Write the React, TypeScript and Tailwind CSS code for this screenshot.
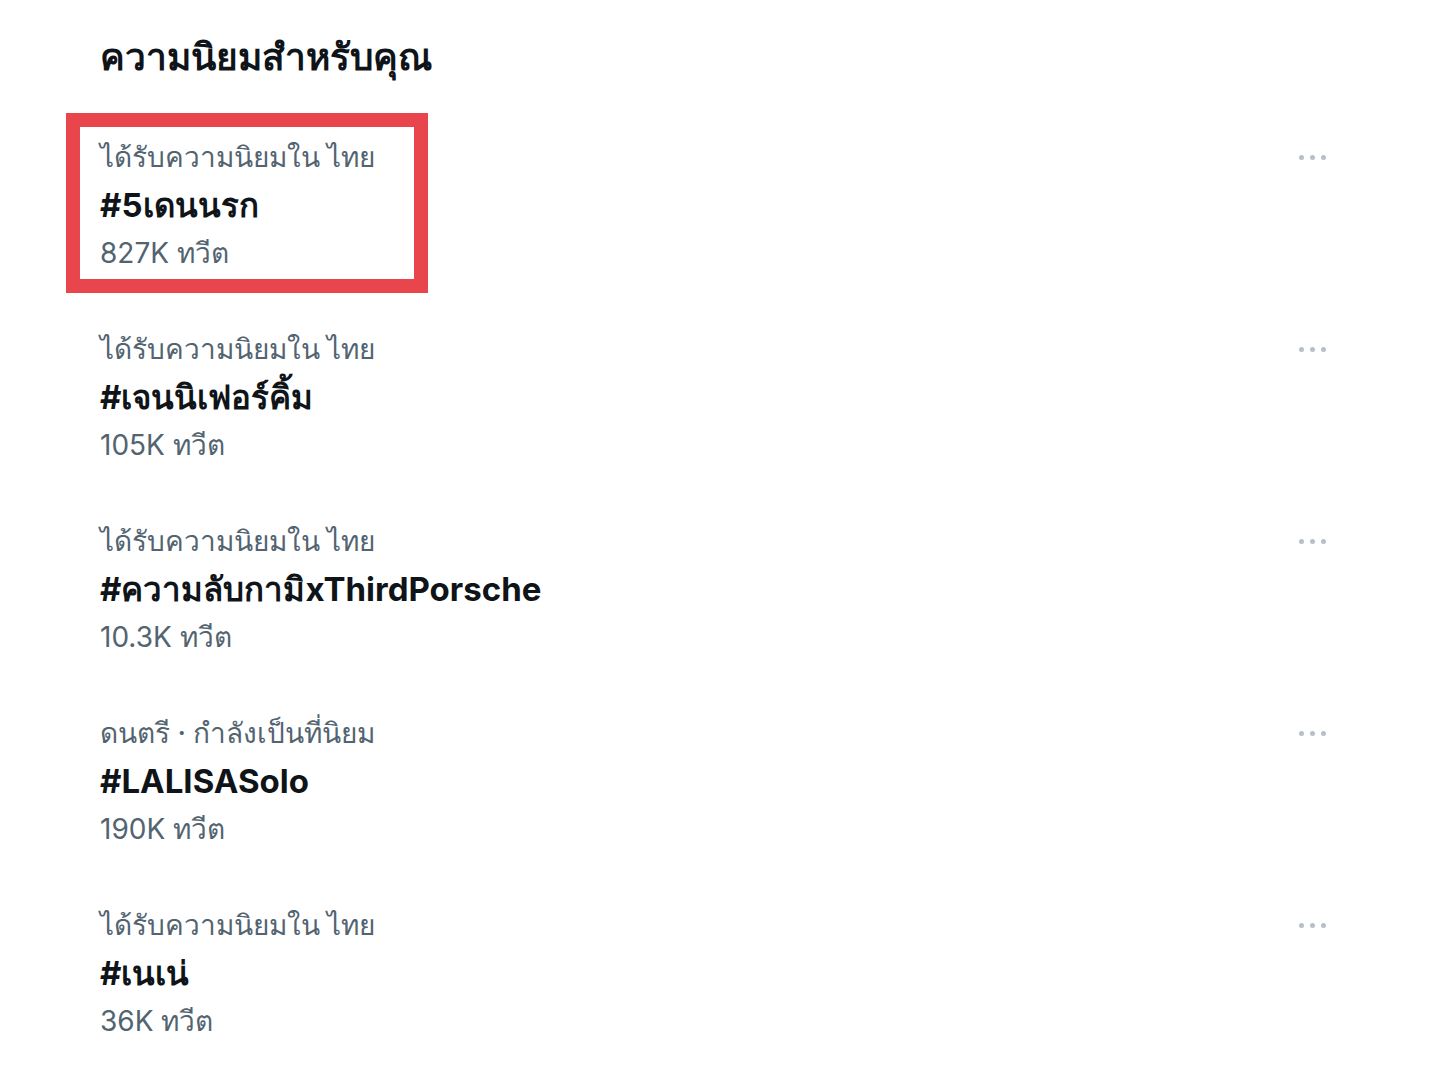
import React from "react";

type Trend = {
  context: string;
  tag: string;
  count: string;
};

const trends: Trend[] = [
  { context: "ได้รับความนิยมใน ไทย", tag: "#5เดนนรก", count: "827K ทวีต" },
  { context: "ได้รับความนิยมใน ไทย", tag: "#เจนนิเฟอร์คิ้ม", count: "105K ทวีต" },
  { context: "ได้รับความนิยมใน ไทย", tag: "#ความลับกามิxThirdPorsche", count: "10.3K ทวีต" },
  { context: "ดนตรี · กำลังเป็นที่นิยม", tag: "#LALISASolo", count: "190K ทวีต" },
  { context: "ได้รับความนิยมใน ไทย", tag: "#เนเน่", count: "36K ทวีต" },
];

function MoreDots() {
  return (
    <div className="flex items-center gap-[6px] h-[48px]">
      <span className="w-[5px] h-[5px] rounded-full bg-[#b4c0ca]"></span>
      <span className="w-[5px] h-[5px] rounded-full bg-[#b4c0ca]"></span>
      <span className="w-[5px] h-[5px] rounded-full bg-[#b4c0ca]"></span>
    </div>
  );
}

function TrendRow({ context, tag, count }: Trend) {
  return (
    <div className="flex justify-between items-start pl-[100px] pr-[113px]">
      <div className="flex flex-col">
        <span className="text-[28px] leading-[48px] font-medium text-[#536471]">{context}</span>
        <span className="text-[33px] leading-[48px] font-bold text-[#0f1419]">{tag}</span>
        <span className="text-[28px] leading-[48px] text-[#536471]">{count}</span>
      </div>
      <MoreDots />
    </div>
  );
}

export default function App() {
  return (
    <div
      className="relative w-full h-[1075px] bg-white overflow-hidden"
      style={{ fontFamily: "Inter, 'Noto Sans', 'Liberation Sans', sans-serif" }}
    >
      {/* Title */}
      <h1 className="pt-[33px] pl-[100px] text-[37px] leading-[48px] font-bold text-[#0f1419]">
        ความนิยมสำหรับคุณ
      </h1>

      {/* Trend list */}
      <div className="mt-[52px] flex flex-col gap-[48px]">
        {trends.map((t, i) => (
          <TrendRow key={i} {...t} />
        ))}
      </div>

      {/* Highlight annotation over the first trend */}
      <div className="absolute left-[66px] top-[113px] w-[362px] h-[180px] border-[14px] border-[#e8464c]"></div>
    </div>
  );
}
